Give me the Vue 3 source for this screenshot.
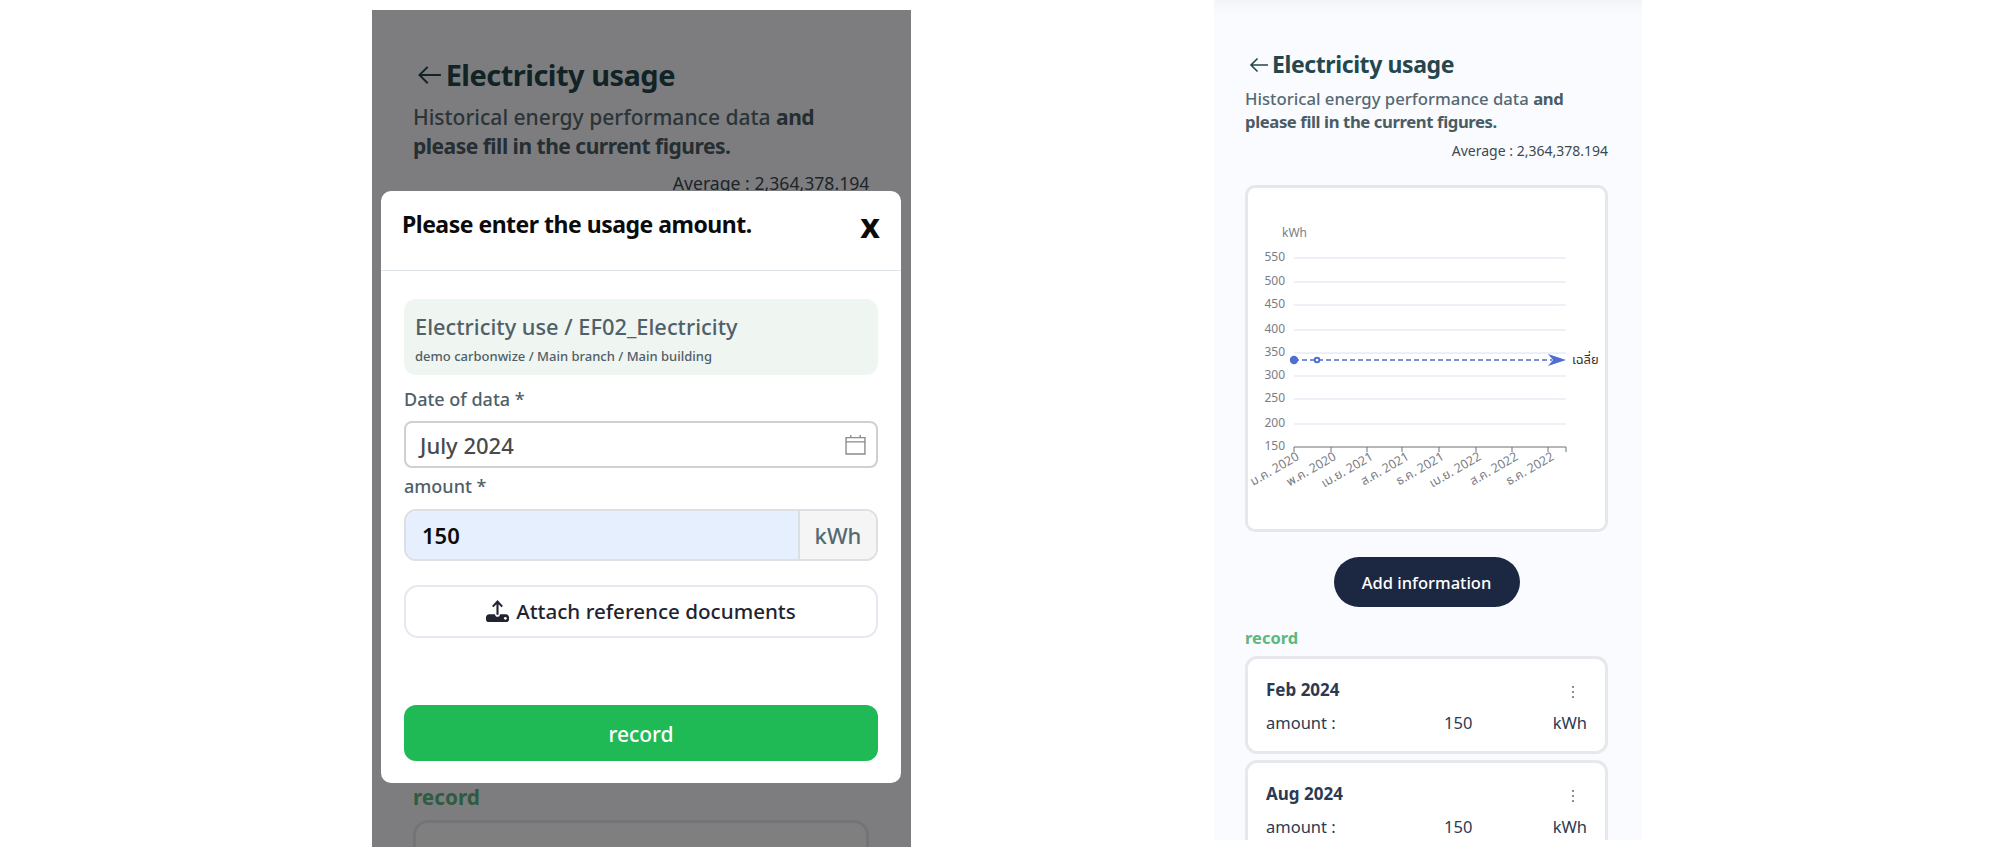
<template>
  <div class="page">
    <div
      v-for="phone in phones"
      :key="phone"
      class="phone"
      :class="phone"
    >
      <div class="content">
        <div class="title-row">
          <svg class="back-icon" viewBox="0 0 20 16" width="20" height="16">
            <path d="M19 8H2M8.500 1.500 2 8l6.500 6.500" />
          </svg>
          <h1>Electricity usage</h1>
        </div>
        <p class="subtitle">Historical energy performance data <b>and please fill in the current figures.</b></p>
        <div class="average">Average : 2,364,378.194</div>

        <div class="chart-card">
          <svg class="chart" viewBox="0 0 356 339" width="356" height="339">
            <text x="34" y="48" class="unit">kWh</text>
            <g v-for="g in grid" :key="g.label">
              <line v-if="g.label !== 150" x1="46" x2="318" :y1="g.y" :y2="g.y" class="grid-line" />
              <text x="37" :y="g.y + 3" class="y-label">{{ g.label }}</text>
            </g>
            <line x1="46" x2="318" y1="258" y2="258" class="axis" />
            <line v-for="t in ticks" :key="t" :x1="t" :x2="t" y1="258" y2="263" class="axis" />
            <text
              v-for="l in xLabels"
              :key="l.text + l.x"
              class="x-label"
              :transform="`translate(${l.x} 270) rotate(-30)`"
            >{{ l.text }}</text>
            <line x1="46" x2="304" y1="171" y2="171" class="avg-line" />
            <circle cx="46" cy="171" r="4.200" class="avg-dot" />
            <circle cx="69" cy="171" r="2.300" class="avg-ring" />
            <path d="M300 165 318 171 300 177 305 171Z" class="avg-dot" />
            <text x="324" y="175" class="avg-label">เฉลี่ย</text>
          </svg>
        </div>

        <button class="add-btn">Add information</button>

        <div class="record-label">record</div>
        <div v-for="r in records" :key="r" class="record-card">
          <div class="record-head">
            <span class="record-date">{{ r }}</span>
            <svg class="more" viewBox="0 0 4 14" width="4" height="14">
              <circle cx="2" cy="2" r="1" />
              <circle cx="2" cy="7" r="1" />
              <circle cx="2" cy="12" r="1" />
            </svg>
          </div>
          <div class="record-row">
            <span>amount :</span>
            <span>150</span>
            <span>kWh</span>
          </div>
        </div>
      </div>

      <template v-if="phone === 'dimmed'">
        <div class="backdrop"></div>
        <div class="modal">
          <div class="modal-head">
            <span class="modal-title">Please enter the usage amount.</span>
            <span class="modal-close">x</span>
          </div>
          <div class="modal-body">
            <div class="info-box">
              <div class="info-title">Electricity use / EF02_Electricity</div>
              <div class="info-sub">demo carbonwize / Main branch / Main building</div>
            </div>
            <label class="field-label date-label">Date of data *</label>
            <div class="date-input">
              <span>July 2024</span>
              <svg viewBox="0 0 20 20" width="21" height="21" class="cal-icon">
                <path d="M1 3.500H19V19H1ZM1 7.500H19M5.500 1V4M14.500 1V4" />
              </svg>
            </div>
            <label class="field-label amount-label">amount *</label>
            <div class="amount-group">
              <span class="amount-value">150</span>
              <span class="amount-unit">kWh</span>
            </div>
            <button class="attach-btn">
              <svg viewBox="0 0 22 22" width="23" height="23" class="upload-icon">
                <path d="M11 1 5.800 6.600 7.200 8 10 5V15H12V5L14.800 8 16.200 6.600Z" />
                <path d="M3 14.500H8.500C8.800 16 9.800 17 11 17S13.200 16 13.500 14.500H19C20.700 14.500 22 16 22 17.500V19.500C22 20.700 21 22 19.500 22H2.500C1 22 0 20.700 0 19.500V17.500C0 16 1.300 14.500 3 14.500Z" />
                <circle cx="18.500" cy="18.500" r="1.300" fill="#fff" />
              </svg>
              Attach reference documents
            </button>
            <button class="save-btn">record</button>
          </div>
        </div>
      </template>
    </div>
  </div>
</template>

<script setup>
const phones = ['dimmed', 'plain']

const grid = [
  { label: 550, y: 69 },
  { label: 500, y: 93 },
  { label: 450, y: 116 },
  { label: 400, y: 141 },
  { label: 350, y: 164 },
  { label: 300, y: 187 },
  { label: 250, y: 210 },
  { label: 200, y: 235 },
  { label: 150, y: 258 }
]

const ticks = [46, 83, 119, 154, 191, 228, 264, 300, 318]

const xLabels = [
  { text: 'ม.ค. 2020', x: 52 },
  { text: 'พ.ค. 2020', x: 89 },
  { text: 'เม.ย. 2021', x: 126 },
  { text: 'ส.ค. 2021', x: 162 },
  { text: 'ธ.ค. 2021', x: 197 },
  { text: 'เม.ย. 2022', x: 234 },
  { text: 'ส.ค. 2022', x: 271 },
  { text: 'ธ.ค. 2022', x: 307 }
]

const records = ['Feb 2024', 'Aug 2024']
</script>

<style>
html,
body {
  background: #fff;
}
</style>

<style scoped>
.page {
  display: flex;
  align-items: flex-start;
  padding-left: 372px;
  height: 866px;
  overflow: hidden;
  font-family: "Noto Sans", "Noto Sans Thai", sans-serif;
}

.phone {
  position: relative;
  overflow: hidden;
  background: #fafbff;
}

.phone.dimmed {
  width: 539px;
  height: 837px;
  margin-top: 10px;
}

.phone.plain {
  width: 428px;
  height: 840px;
  margin-left: 303px;
  background: linear-gradient(#f3f4f7 0, #fafbff 14px);
}

.dimmed .content {
  zoom: 1.26;
  margin-top: -13px;
  padding-left: 32.500px;
  padding-right: 33px;
}

.dimmed .title-row {
  padding-left: 3px;
}

.content {
  padding: 49px 34px 0 31px;
}

.title-row {
  display: flex;
  align-items: center;
  gap: 3px;
  height: 30px;
  padding-left: 4px;
}

.back-icon {
  margin-top: 2px;
  fill: none;
  stroke: #24474d;
  stroke-width: 1.600;
}

h1 {
  margin: 0;
  font-size: 23px;
  font-weight: 700;
  letter-spacing: -0.4px;
  color: #24474d;
}

.subtitle {
  margin: 8px 0 0;
  font-size: 16.700px;
  line-height: 23px;
  font-weight: 500;
  color: #566971;
}

.subtitle b {
  font-weight: 700;
  letter-spacing: -0.4px;
  color: #4a5c64;
}

.average {
  margin-top: 8px;
  text-align: right;
  font-size: 14px;
  line-height: 20px;
  color: #3a4a52;
}

.chart-card {
  margin-top: 24px;
  height: 347px;
  box-sizing: border-box;
  border: 3px solid #e5e7eb;
  border-radius: 10px;
  background: #fff;
}

.chart {
  display: block;
  margin-top: 1px;
}

.grid-line {
  stroke: #e8ebf5;
  stroke-width: 1.500;
}

.axis {
  stroke: #6e7079;
  stroke-width: 1;
}

.unit,
.x-label,
.y-label {
  font-size: 12px;
  fill: #7a7c85;
}

.y-label {
  text-anchor: end;
}

.x-label {
  font-size: 12.500px;
  text-anchor: end;
}

.avg-line {
  stroke: #4f6fd0;
  stroke-width: 1.300;
  stroke-dasharray: 5 3;
}

.avg-dot {
  fill: #4f6fd0;
}

.avg-ring {
  fill: #fff;
  stroke: #4f6fd0;
  stroke-width: 2;
}

.avg-label {
  font-size: 13px;
  fill: #333;
}

.add-btn {
  display: block;
  margin: 25px auto 0;
  width: 186px;
  height: 50px;
  border: none;
  border-radius: 25px;
  background: #1c2741;
  color: #fff;
  font-family: inherit;
  font-size: 16.500px;
  font-weight: 500;
}

.record-label {
  margin-top: 20px;
  font-size: 16.500px;
  line-height: 22px;
  font-weight: 700;
  color: #5cb87c;
}

.record-card {
  box-sizing: border-box;
  height: 98px;
  margin-top: 6px;
  padding: 18px 18px 0;
  border: 3px solid #e6e8ec;
  border-radius: 12px;
  background: #fff;
  color: #2b3a52;
}

.record-label + .record-card {
  margin-top: 7px;
}

.record-head {
  display: flex;
  justify-content: space-between;
  align-items: center;
  height: 24px;
}

.record-date {
  font-size: 17px;
  font-weight: 700;
}

.more {
  margin-right: 12px;
  margin-top: 6px;
  fill: #667;
}

.record-row {
  display: grid;
  grid-template-columns: 178px 1fr auto;
  margin-top: 11px;
  font-size: 16.500px;
  line-height: 22px;
}

.backdrop {
  position: absolute;
  inset: 0;
  background: rgba(0, 0, 0, 0.5);
}

.modal {
  position: absolute;
  left: 9px;
  top: 181px;
  width: 520px;
  height: 592px;
  display: flex;
  flex-direction: column;
  border-radius: 10px;
  background: #fff;
}

.modal-head {
  display: flex;
  justify-content: space-between;
  height: 80px;
  flex-shrink: 0;
  box-sizing: border-box;
  padding: 17px 21px 0;
  border-bottom: 1px solid #dfe4e8;
}

.modal-title {
  font-size: 23px;
  font-weight: 700;
  letter-spacing: -0.5px;
  color: #0b0b0b;
}

.modal-close {
  font-size: 34px;
  line-height: 38px;
  font-weight: 700;
  margin-top: -2px;
  color: #0b0b0b;
}

.modal-body {
  flex: 1;
  display: flex;
  flex-direction: column;
  padding: 28px 23px 22px;
}

.info-box {
  height: 76px;
  flex-shrink: 0;
  box-sizing: border-box;
  padding: 12px 11px 0;
  border-radius: 12px;
  background: #eff5f1;
  color: #4f6068;
}

.info-title {
  font-size: 21.800px;
  line-height: 32px;
  font-weight: 500;
}

.info-sub {
  margin-top: 3px;
  font-size: 13px;
  line-height: 20px;
  font-weight: 500;
}

.field-label {
  display: flex;
  align-items: center;
  height: 40px;
  font-size: 18px;
  font-weight: 500;
  color: #4f6068;
}

.date-label {
  height: 46px;
  padding-top: 2px;
  box-sizing: border-box;
}

.amount-label {
  height: 36px;
  padding-bottom: 5px;
}

.date-input {
  display: flex;
  align-items: center;
  justify-content: space-between;
  height: 47px;
  box-sizing: border-box;
  padding: 0 10px 0 14px;
  border: 2px solid #d0d0d0;
  border-radius: 8px;
  font-size: 22px;
  font-weight: 500;
  color: #4a4a4a;
}

.cal-icon {
  fill: none;
  stroke: #8a8a8a;
  stroke-width: 1.300;
}

.amount-group {
  display: flex;
  height: 52px;
  flex-shrink: 0;
  box-sizing: border-box;
  border: 2px solid #dcdfe4;
  border-radius: 12px;
  overflow: hidden;
  font-size: 22px;
  font-weight: 500;
}

.amount-value {
  flex: 1;
  display: flex;
  align-items: center;
  padding-left: 16px;
  background: #e5effd;
  font-weight: 600;
  color: #0b0b0b;
}

.amount-unit {
  display: flex;
  align-items: center;
  justify-content: center;
  width: 76px;
  border-left: 2px solid #dcdfe4;
  background: #f5f5f5;
  color: #566971;
}

.attach-btn {
  display: flex;
  align-items: center;
  justify-content: center;
  gap: 7px;
  height: 53px;
  margin-top: 24px;
  padding-bottom: 3px;
  flex-shrink: 0;
  border: 2px solid #e5e8ee;
  border-radius: 14px;
  background: #fff;
  color: #1f2430;
  font-family: inherit;
  font-size: 20.600px;
  font-weight: 500;
}

.upload-icon {
  fill: #1f2430;
}

.save-btn {
  height: 56px;
  padding-top: 3px;
  margin-top: auto;
  flex-shrink: 0;
  border: none;
  border-radius: 12px;
  background: #1fba56;
  color: #fff;
  font-family: inherit;
  font-size: 21px;
  font-weight: 500;
}
</style>
